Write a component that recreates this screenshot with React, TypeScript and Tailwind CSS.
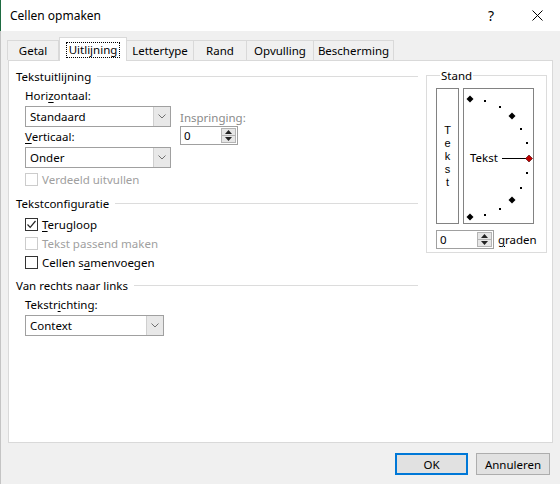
import React from "react";

const font = { fontFamily: '"Noto Sans", "Segoe UI", sans-serif' };

function Underlined({ text, at }: { text: string; at: number }) {
  return (
    <span>
      {text.slice(0, at)}
      <span className="underline underline-offset-2">{text[at]}</span>
      {text.slice(at + 1)}
    </span>
  );
}

function GroupHeader({ title }: { title: string }) {
  return (
    <div className="flex h-[16px] items-center">
      <span className="whitespace-nowrap">{title}</span>
      <div className="ml-[6px] h-px flex-1 bg-[#dcdcdc]" />
    </div>
  );
}

function Select({ value, width }: { value: string; width: string }) {
  return (
    <div className={`flex h-[21px] border border-[#a0a0a0] bg-white ${width}`}>
      <div className="flex flex-1 items-center pl-[4px]">{value}</div>
      <div className="flex w-[17px] items-center justify-center border-l border-[#cfcfcf] bg-[#e8e8e8]">
        <svg width="8" height="5" viewBox="0 0 8 5">
          <path d="M0.5 0.5 L4 4 L7.5 0.5" fill="none" stroke="#707070" strokeWidth="1" />
        </svg>
      </div>
    </div>
  );
}

function Spinner({ value, width }: { value: string; width: string }) {
  return (
    <div className={`flex h-[19px] border border-[#a0a0a0] bg-white ${width}`}>
      <div className="flex flex-1 items-center pl-[3px]">{value}</div>
      <div className="my-px mr-px flex w-[15px] flex-col border border-[#b4b4b4] bg-[#e6e6e6]">
        <div className="flex flex-1 items-center justify-center border-b border-[#b4b4b4]">
          <svg width="7" height="4" viewBox="0 0 7 4">
            <path d="M0 4 L3.5 0 L7 4 Z" fill="#222" />
          </svg>
        </div>
        <div className="flex flex-1 items-center justify-center">
          <svg width="7" height="4" viewBox="0 0 7 4">
            <path d="M0 0 L3.5 4 L7 0 Z" fill="#222" />
          </svg>
        </div>
      </div>
    </div>
  );
}

function Checkbox({
  label,
  checked,
  disabled,
}: {
  label: React.ReactNode;
  checked?: boolean;
  disabled?: boolean;
}) {
  return (
    <div className={`flex h-[19px] items-center ${disabled ? "text-[#a0a0a0]" : ""}`}>
      <div
        className={`flex h-[13px] w-[13px] items-center justify-center border bg-white ${
          disabled ? "border-[#cccccc]" : "border-[#333333]"
        }`}
      >
        {checked && (
          <svg width="11" height="11" viewBox="0 0 11 11">
            <path d="M1.5 5.5 L4.2 8.3 L9.5 2" fill="none" stroke="#222" strokeWidth="1.2" />
          </svg>
        )}
      </div>
      <span className="ml-[4px]">{label}</span>
    </div>
  );
}

const tabs = [
  { name: "Getal", w: "w-[52px]" },
  { name: "Uitlijning", w: "w-[68px]", active: true },
  { name: "Lettertype", w: "w-[68px]" },
  { name: "Rand", w: "w-[54px]" },
  { name: "Opvulling", w: "w-[68px]" },
  { name: "Bescherming", w: "w-[81px]" },
];

function Dial() {
  const cx = 6;
  const cy = 69;
  const r = 59;
  const dots = [75, 60, 30, 15, -15, -30, -60, -75];
  const diamonds = [90, 45, -45, -90];
  const pt = (a: number) => {
    const rad = (a * Math.PI) / 180;
    return [cx + r * Math.cos(rad), cy - r * Math.sin(rad)];
  };
  const diamond = (x: number, y: number) =>
    `M${x} ${y - 3.5} L${x + 3.5} ${y} L${x} ${y + 3.5} L${x - 3.5} ${y} Z`;
  return (
    <svg width="69" height="134" viewBox="0 0 69 134">
      {dots.map((a) => {
        const [x, y] = pt(a);
        return <rect key={a} x={Math.round(x) - 1} y={Math.round(y) - 1} width="2" height="2" fill="#000" />;
      })}
      {diamonds.map((a) => {
        const [x, y] = pt(a);
        return <path key={a} d={diamond(Math.round(x), Math.round(y))} fill="#000" />;
      })}
      <text x="6" y="73" fontSize="11.5" fill="#000" style={font}>
        Tekst
      </text>
      <line x1="38" y1="69.5" x2="62" y2="69.5" stroke="#000" strokeWidth="1" />
      <path d={diamond(65, 69.5)} fill="#c00000" stroke="#400000" strokeWidth="0.6" />
    </svg>
  );
}

export default function App() {
  return (
    <div
      className="flex h-[484px] w-[560px] flex-col border-l border-[#c4c4c4] bg-[#f0f0f0] text-[11.5px] leading-[15px] text-black"
      style={font}
    >
      {/* title bar */}
      <div className="-ml-px flex h-[31px] items-center border-l border-[#1e6b41] bg-white">
        <span className="ml-[9px] text-[12px]">Cellen opmaken</span>
        <div className="ml-auto flex h-full w-[46px] items-center justify-center text-[14px]">?</div>
        <div className="flex h-full w-[46px] items-center justify-center">
          <svg width="11" height="11" viewBox="0 0 11 11">
            <path d="M0.5 0.5 L10.5 10.5 M10.5 0.5 L0.5 10.5" stroke="#000" strokeWidth="1" />
          </svg>
        </div>
      </div>

      {/* tabs */}
      <div className="ml-[7px] mt-[7px] flex h-[22px] items-end">
        {tabs.map((t) =>
          t.active ? (
            <div
              key={t.name}
              className={`relative z-10 -mb-px flex h-[24px] items-center justify-center border border-b-0 border-[#d9d9d9] bg-white ${t.w}`}
            >
              <span className="border border-dotted border-black px-[2px] leading-[14px]">{t.name}</span>
            </div>
          ) : (
            <div
              key={t.name}
              className={`-ml-px flex h-[20px] items-center justify-center border border-b-0 border-[#d9d9d9] bg-[#f0f0f0] ${t.w}`}
            >
              {t.name}
            </div>
          )
        )}
      </div>

      {/* panel */}
      <div className="ml-[7px] flex h-[383px] w-[545px] border border-[#d9d9d9] bg-white pl-[7px] pt-[7px]">
        <div className="flex w-[402px] flex-col">
          <GroupHeader title="Tekstuitlijning" />
          <div className="pl-[9px]">
            <div className="mt-[4px]">
              <Underlined text="Horizontaal:" at={4} />
            </div>
            <div className="mt-[3px] flex">
              <div className="flex flex-col">
                <Select value="Standaard" width="w-[146px]" />
                <div className="mt-[2px]">
                  <Underlined text="Verticaal:" at={0} />
                </div>
                <div className="mt-[3px]">
                  <Select value="Onder" width="w-[146px]" />
                </div>
                <div className="mt-[2px]">
                  <Checkbox label="Verdeeld uitvullen" disabled />
                </div>
              </div>
              <div className="ml-[9px] flex flex-col">
                <div className="mt-[4px] text-[#8a8a8a]">Inspringing:</div>
                <div className="mt-[1px]">
                  <Spinner value="0" width="w-[58px]" />
                </div>
              </div>
            </div>
          </div>

          <div className="mt-[6px]">
            <GroupHeader title="Tekstconfiguratie" />
          </div>
          <div className="mt-[4px] pl-[9px]">
            <Checkbox label={<Underlined text="Terugloop" at={0} />} checked />
            <Checkbox label="Tekst passend maken" disabled />
            <Checkbox label={<Underlined text="Cellen samenvoegen" at={8} />} />
          </div>

          <div className="mt-[5px]">
            <GroupHeader title="Van rechts naar links" />
          </div>
          <div className="pl-[9px]">
            <div className="mt-[4px]">
              <Underlined text="Tekstrichting:" at={6} />
            </div>
            <div className="mt-[3px]">
              <Select value="Context" width="w-[139px]" />
            </div>
          </div>
        </div>

        {/* Stand */}
        <fieldset className="ml-[8px] h-[185px] w-[117px] border border-[#dcdcdc] px-[9px] pb-[3px]">
          <legend className="ml-[4px] px-[1px] leading-[15px]">Stand</legend>
          <div className="mt-[5px] flex gap-[4px]">
            <div
              className="flex h-[136px] w-[23px] flex-col items-center justify-center border border-[#828282] text-[11px] leading-[13px]"
              style={{ fontFamily: '"Liberation Sans", Arial, sans-serif' }}
            >
              {"Tekst".split("").map((c, i) => (
                <span key={i} className="block h-[13px]">
                  {c}
                </span>
              ))}
            </div>
            <div className="h-[136px] w-[71px] border border-[#828282]">
              <Dial />
            </div>
          </div>
          <div className="mt-[6px] flex items-center">
            <Spinner value="0" width="w-[58px]" />
            <span className="ml-[4px]">
              <Underlined text="graden" at={0} />
            </span>
          </div>
        </fieldset>
      </div>

      {/* buttons */}
      <div className="mt-[10px] flex justify-end gap-[8px] pr-[10px]">
        <button className="h-[22px] w-[73px] border-2 border-[#0078d7] bg-[#e1e1e1]">OK</button>
        <button className="h-[22px] w-[74px] border border-[#adadad] bg-[#e1e1e1]">Annuleren</button>
      </div>
    </div>
  );
}
